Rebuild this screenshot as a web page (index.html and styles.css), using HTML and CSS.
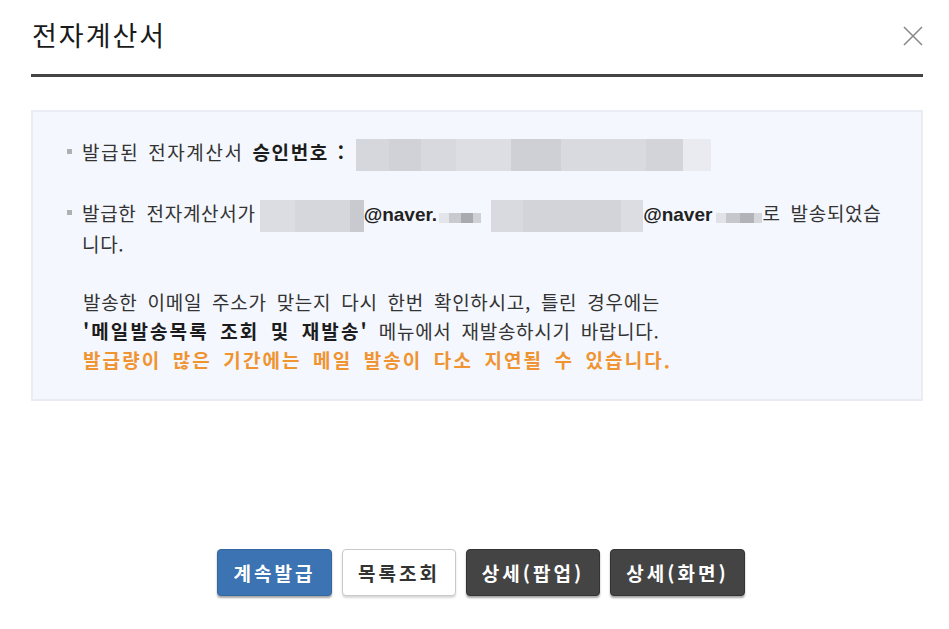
FILE: index.html
```html
<!DOCTYPE html>
<html lang="ko">
<head>
<meta charset="utf-8">
<title>전자계산서</title>
<link rel="stylesheet" href="styles.css">
</head>
<body>
<div class="dialog">
  <header class="head">
    <h1 class="title">전자계산서</h1>
    <button class="close" aria-label="닫기">
      <svg width="20" height="20" viewBox="0 0 20 20"><path d="M1 1L19 19M19 1L1 19" stroke="#8a8a8a" stroke-width="1.6" fill="none"/></svg>
    </button>
  </header>

  <section class="panel">
    <ul class="list">
      <li class="item item-wide">발급된 전자계산서 <strong class="strong">승인번호 :</strong> <span class="blur blur-num"></span></li>
      <li class="item">발급한 전자계산서가<span class="blur blur-id1"></span><span class="mail">@naver.</span><span class="pix pix1"></span> <span class="blur blur-id2"></span><span class="mail">@naver</span><span class="pix pix2"></span>로 발송되었습<br>니다.</li>
    </ul>
    <p class="note">발송한 이메일 주소가 맞는지 다시 한번 확인하시고, 틀린 경우에는<br><strong class="strong strong-wide">'메일발송목록 조회 및 재발송'</strong> 메뉴에서 재발송하시기 바랍니다.<br><strong class="warn">발급량이 많은 기간에는 메일 발송이 다소 지연될 수 있습니다.</strong></p>
  </section>

  <div class="actions">
    <button class="btn btn-blue">계속발급</button>
    <button class="btn btn-white">목록조회</button>
    <button class="btn btn-dark btn-wide">상세(팝업)</button>
    <button class="btn btn-dark btn-wide">상세(화면)</button>
  </div>
</div>
</body>
</html>
```

FILE: styles.css
```css
* { box-sizing: border-box; }
html, body { margin: 0; padding: 0; background: #fff; }
body {
  font-family: "Noto Sans CJK KR", "Noto Sans", sans-serif;
  color: #333;
  width: 949px;
  height: 629px;
  overflow: hidden;
}
.dialog { padding: 0 26px 0 31px; }
.head {
  display: flex;
  align-items: center;
  justify-content: space-between;
  height: 77px;
  border-bottom: 3px solid #444;
  padding-bottom: 4px;
}
.title {
  margin: 0 0 0 1px;
  font-size: 27px;
  font-weight: 400;
  letter-spacing: 2px;
  color: #1a1a1a;
  line-height: 40px;
}
.close {
  border: 0;
  background: none;
  padding: 0;
  width: 20px;
  height: 20px;
  margin-top: 2px;
  cursor: pointer;
}
.close svg { display: block; }

.panel {
  margin-top: 33px;
  height: 291px;
  background: #f4f7fd;
  border: 2px solid #e9ecf2;
  padding: 25px 20px 0 49px;
  font-size: 19px;
  line-height: 29px;
  letter-spacing: 0.7px;
  word-spacing: 4px;
}
.list { list-style: none; margin: 0; padding: 0; }
.item { position: relative; margin-bottom: 31px; }
.item-wide { letter-spacing: 1.6px; word-spacing: 2px; }
.item::before {
  content: "";
  position: absolute;
  left: -15px;
  top: 12px;
  width: 5px;
  height: 5px;
  background: #b0b0b0;
}
.item:last-child { margin-bottom: 29px; }
.strong { font-weight: 700; color: #1c1c1c; }
.strong-wide { letter-spacing: 2.1px; }
.warn { font-weight: 700; color: #ef9431; letter-spacing: 2.1px; }
.note { margin: 0 0 0 1px; }

.blur {
  display: inline-block;
  vertical-align: middle;
  height: 32px;
  margin: -4px 0;
}
.blur-num {
  width: 355px;
  margin-left: 2px;
  background: linear-gradient(90deg, #d6d7dc 0 33px, #d1d2d8 33px 65px, #d8d9df 65px 100px, #dddee4 100px 155px, #cfd0d6 155px 205px, #d9dae0 205px 290px, #d3d4d9 290px 327px, #e9ebf0 327px);
}
.blur-id1 {
  width: 104px;
  margin-left: 4px;
  background: linear-gradient(90deg, #dcdde2 0 35px, #d6d7dc 35px 90px, #c9cacf 90px);
}
.blur-id2 {
  width: 152px;
  background: linear-gradient(90deg, #d9dadf 0 32px, #d3d4d9 32px 130px, #dcdde2 130px);
}
.mail {
  font-family: "Liberation Sans", Arial, sans-serif;
  font-weight: 700;
  color: #222;
  letter-spacing: 0;
}
.pix {
  display: inline-block;
  vertical-align: middle;
  height: 10px;
  margin-top: 4px;
}
.pix1 { width: 42px; margin-left: 2px; background: linear-gradient(90deg, #e4e5ea 0 10px, #c9cacf 10px 22px, #a9aaaf 22px 34px, #d0d1d6 34px); }
.pix2 { width: 46px; margin-left: 4px; background: linear-gradient(90deg, #e1e2e7 0 10px, #c6c7cc 10px 24px, #b2b3b8 24px 38px, #d6d7dc 38px); }

.actions {
  display: flex;
  justify-content: center;
  gap: 10px;
  margin-top: 148px;
  padding-left: 8px;
}
.btn {
  height: 47px;
  width: 115px;
  border-radius: 4px;
  font-family: "Noto Sans CJK KR", sans-serif;
  font-size: 19px;
  font-weight: 700;
  letter-spacing: 3px;
  padding: 0;
  cursor: pointer;
  box-shadow: 0 2px 2px rgba(0,0,0,0.35);
}
.btn-blue { background: #3b73b3; border: 1px solid #34669f; color: #fff; }
.btn-white { width: 114px; background: #fff; border: 1px solid #c9c9c9; color: #333; box-shadow: 0 2px 2px rgba(0,0,0,0.15); }
.btn-dark { background: #444; border: 1px solid #333; color: #fff; }
.btn-wide { width: 134px; }
.btn-wide:last-child { width: 135px; }
```
